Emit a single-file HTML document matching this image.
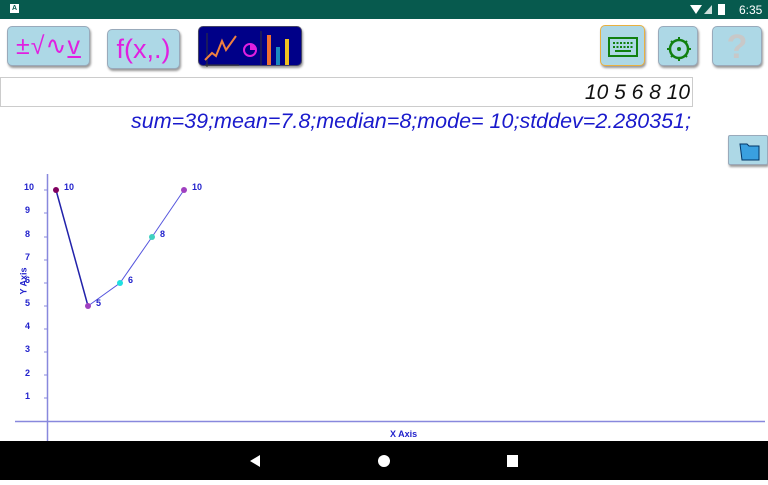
<!DOCTYPE html>
<html><head><style>
*{margin:0;padding:0;box-sizing:border-box}
body{width:768px;height:480px;position:relative;overflow:hidden;background:#fff;font-family:"Liberation Sans",sans-serif}
.sb{position:absolute;left:0;top:0;width:768px;height:19px;background:#075a4e;color:#fff;font-size:12px}
.btn{position:absolute;background:#add8e6;border-radius:5px;box-shadow:1px 2px 2px #999;border:1px solid #9ab}
.nav{position:absolute;left:0;top:441px;width:768px;height:39px;background:#000}
.t{position:absolute;font-size:9px;font-weight:bold;color:#2222cc}
</style></head><body>
<div class="sb">
 <div style="position:absolute;left:10px;top:4px;width:9px;height:9px;background:#fff;color:#075a4e;font-size:7px;font-weight:bold;text-align:center;line-height:9px">A</div>
 <svg style="position:absolute;left:690px;top:3px" width="40" height="13"><path d="M0 2 L12 2 L6 11Z" fill="#fff"/><path d="M14 11 L22 2 L22 11Z" fill="#fff" opacity=".8"/><rect x="28" y="1" width="7" height="11" fill="#fff"/></svg>
 <div style="position:absolute;left:739px;top:3px">6:35</div>
</div>
<div class="btn" style="left:7px;top:26px;width:83px;height:40px;color:#e020e0;font-size:25px;text-align:center;line-height:38px;letter-spacing:1px">±√∿<u>v</u></div>
<div class="btn" style="left:107px;top:29px;width:73px;height:40px;color:#e020e0;font-size:27px;text-align:center;line-height:38px">f(x,.)</div>
<div class="btn" style="left:198px;top:26px;width:104px;height:40px;background:#000088;border-color:#446">
 <svg width="104" height="40"><line x1="8" y1="6" x2="8" y2="40" stroke="#333"/><line x1="6" y1="38" x2="40" y2="38" stroke="#333"/><polyline points="6,33 13,26 17,29 23,14 27,23 37,9" fill="none" stroke="#f08040" stroke-width="2"/><circle cx="51" cy="23" r="6" fill="none" stroke="#e020e0" stroke-width="2"/><path d="M51 23 L51 17 A6 6 0 0 1 57 23Z" fill="#e020e0"/><line x1="62" y1="4" x2="62" y2="38" stroke="#333"/><rect x="68" y="8" width="4" height="30" fill="#f07030"/><rect x="77" y="20" width="4" height="18" fill="#1a8ac0"/><rect x="86" y="12" width="4" height="26" fill="#f0c020"/></svg>
</div>
<div class="btn" style="left:600px;top:25px;width:45px;height:41px;border:1.5px solid #e8b040">
 <svg width="45" height="41"><rect x="8" y="12" width="28" height="18" fill="none" stroke="#108010" stroke-width="2"/><g stroke="#108010" stroke-width="2" stroke-dasharray="2 1.5"><line x1="12" y1="17" x2="32" y2="17"/><line x1="12" y1="21" x2="32" y2="21"/></g><line x1="14" y1="25" x2="30" y2="25" stroke="#108010" stroke-width="2"/></svg>
</div>
<div class="btn" style="left:658px;top:26px;width:40px;height:40px">
 <svg width="40" height="40"><circle cx="20" cy="22" r="9" fill="none" stroke="#108010" stroke-width="2.5"/><circle cx="20" cy="22" r="2" fill="#108010"/><g stroke="#108010" stroke-width="2"><line x1="20" y1="10" x2="20" y2="13"/><line x1="20" y1="31" x2="20" y2="34"/><line x1="8" y1="22" x2="11" y2="22"/><line x1="29" y1="22" x2="32" y2="22"/><line x1="12" y1="14" x2="14" y2="16"/><line x1="26" y1="28" x2="28" y2="30"/><line x1="28" y1="14" x2="26" y2="16"/><line x1="12" y1="30" x2="14" y2="28"/></g></svg>
</div>
<div class="btn" style="left:712px;top:26px;width:50px;height:40px;color:#c8c8c8;font-size:34px;font-weight:bold;text-align:center;line-height:40px">?</div>
<div style="position:absolute;left:0;top:77px;width:693px;height:30px;border:1px solid #ccc;font-style:italic;font-size:21px;text-align:right;padding-right:2px;line-height:30px;color:#111">10 5 6 8 10</div>
<div style="position:absolute;left:0;width:691px;top:109px;text-align:right;font-style:italic;font-size:21.5px;color:#1a1acc">sum=39;mean=7.8;median=8;mode= 10;stddev=2.280351;</div>
<div class="btn" style="left:728px;top:135px;width:40px;height:30px;border-radius:2px">
 <svg width="40" height="30"><path d="M11 8 L18 8 L20 10 L30 10 L30 24 L13 24 Z" fill="#3aa0e0" stroke="#036" stroke-width="1"/></svg>
</div>
<svg style="position:absolute;left:0;top:0" width="768" height="441">
 <line x1="47.5" y1="174" x2="47.5" y2="441" stroke="#8888dd" stroke-width="1.5"/>
 <line x1="15" y1="421.5" x2="765" y2="421.5" stroke="#8888dd" stroke-width="1.5"/>
 <g stroke="#8888dd"><line x1="44" y1="190" x2="47" y2="190"/><line x1="44" y1="213" x2="47" y2="213"/><line x1="44" y1="237" x2="47" y2="237"/><line x1="44" y1="260" x2="47" y2="260"/><line x1="44" y1="283" x2="47" y2="283"/><line x1="44" y1="306" x2="47" y2="306"/><line x1="44" y1="329" x2="47" y2="329"/><line x1="44" y1="352" x2="47" y2="352"/><line x1="44" y1="375" x2="47" y2="375"/><line x1="44" y1="398" x2="47" y2="398"/></g>
 <polyline points="56,190 88,306" fill="none" stroke="#2222aa" stroke-width="1.5"/>
 <polyline points="88,306 120,283 152,237 184,190" fill="none" stroke="#5555dd" stroke-width="1"/>
 <circle cx="56" cy="190" r="3" fill="#800060"/><circle cx="88" cy="306" r="3" fill="#a040c0"/><circle cx="120" cy="283" r="3" fill="#20e0e0"/><circle cx="152" cy="237" r="3" fill="#40d0c0"/><circle cx="184" cy="190" r="3" fill="#a040c0"/>
</svg>
<div class="t" style="left:24px;top:182px">10</div><div class="t" style="left:25px;top:205px">9</div><div class="t" style="left:25px;top:229px">8</div><div class="t" style="left:25px;top:252px">7</div><div class="t" style="left:25px;top:275px">6</div><div class="t" style="left:25px;top:298px">5</div><div class="t" style="left:25px;top:321px">4</div><div class="t" style="left:25px;top:344px">3</div><div class="t" style="left:25px;top:368px">2</div><div class="t" style="left:25px;top:391px">1</div>
<div class="t" style="left:64px;top:182px">10</div><div class="t" style="left:96px;top:298px">5</div><div class="t" style="left:128px;top:275px">6</div><div class="t" style="left:160px;top:229px">8</div><div class="t" style="left:192px;top:182px">10</div>
<div class="t" style="left:10px;top:276px;transform:rotate(-90deg)">Y Axis</div>
<div class="t" style="left:390px;top:429px">X Axis</div>
<div class="nav">
 <svg width="768" height="39"><path d="M260 14 L260 26 L250 20Z" fill="#fff"/><circle cx="384" cy="20" r="6" fill="#fff"/><rect x="507" y="14" width="11" height="12" fill="#fff"/></svg>
</div>
</body></html>
